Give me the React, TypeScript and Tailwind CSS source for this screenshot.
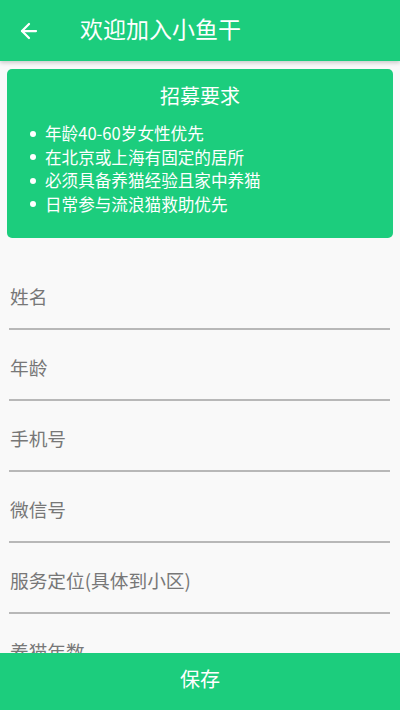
import React from 'react';
import { ArrowLeft } from 'lucide-react';

const requirements = [
  '年龄40-60岁女性优先',
  '在北京或上海有固定的居所',
  '必须具备养猫经验且家中养猫',
  '日常参与流浪猫救助优先',
];

const fields = ['姓名', '年龄', '手机号', '微信号', '服务定位(具体到小区)', '养猫年数'];

export default function App() {
  return (
    <div
      className="flex h-[710px] w-[400px] flex-col overflow-hidden bg-[#f9f9f9]"
      style={{ fontFamily: '"Noto Sans CJK SC", "Noto Sans", sans-serif' }}
    >
      <header className="relative z-10 flex h-[61px] shrink-0 items-center bg-[#1ccd7d] shadow-[0_2px_4px_rgba(0,0,0,0.18)]">
        <button className="ml-[17px] flex h-6 w-6 items-center justify-center text-white">
          <ArrowLeft className="h-6 w-6" strokeWidth={2.25} />
        </button>
        <h1 className="mb-[5px] ml-[39px] text-[23px] leading-none text-white">欢迎加入小鱼干</h1>
      </header>

      <main className="flex-1 overflow-hidden">
        <section className="mx-[7px] mt-2 rounded-[5px] bg-[#1ccd7d] pt-[13px] pb-[22px] text-white">
          <h2 className="text-center text-[20px] leading-[28px]">招募要求</h2>
          <ul className="mt-[12px] pl-[23px]">
            {requirements.map((r) => (
              <li key={r} className="flex items-center text-[16.6px] leading-[23.5px]">
                <span className="mr-[9px] h-[6px] w-[6px] rounded-full bg-white" />
                {r}
              </li>
            ))}
          </ul>
        </section>

        <div className="mt-[21px]">
          {fields.map((f) => (
            <div
              key={f}
              className="ml-[9px] mr-[10px] border-b-2 border-[#b8b8b8] pt-[25px] pb-[20px] pl-px text-[18.7px] leading-[24px] text-[#777777]"
            >
              {f}
            </div>
          ))}
        </div>
      </main>

      <button className="h-[57px] shrink-0 bg-[#1ccd7d] pb-[6px] text-[20px] text-white">保存</button>
    </div>
  );
}
